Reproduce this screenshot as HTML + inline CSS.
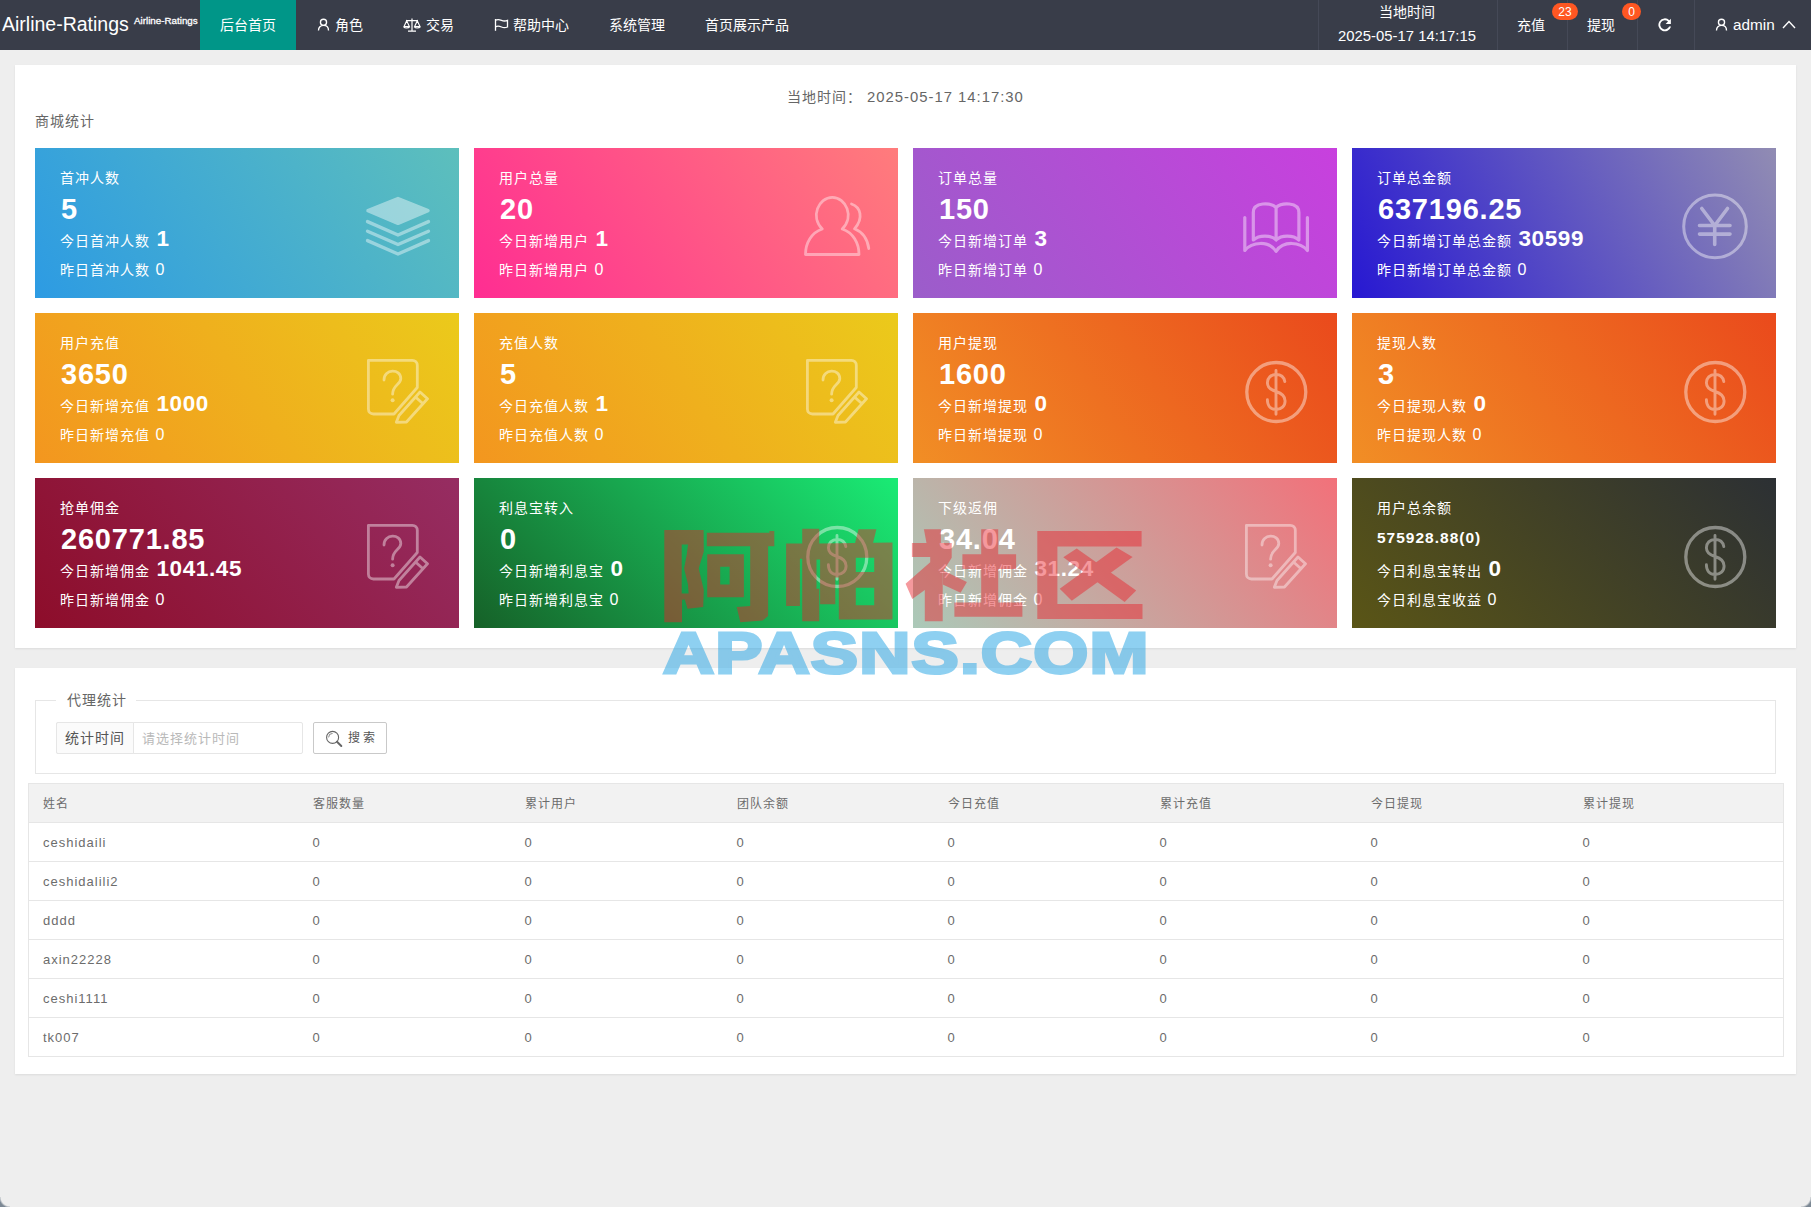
<!DOCTYPE html>
<html lang="zh-CN">
<head>
<meta charset="utf-8">
<title>Airline-Ratings</title>
<style>
*{box-sizing:border-box;margin:0;padding:0}
html,body{width:1811px;height:1207px;overflow:hidden}
body{background:#eeeeee;font-family:"Liberation Sans",sans-serif;font-size:14px;color:#666;position:relative}
#hd{position:absolute;left:0;top:0;width:1811px;height:50px;background:#393D49;color:#fff}
#hd .logo{position:absolute;left:2px;top:0;height:50px;line-height:49px;font-size:19.5px;color:#fff;white-space:nowrap}
#hd .logo2{position:absolute;left:134px;top:15px;line-height:12px;font-size:9.8px;-webkit-text-stroke:.3px #fff;color:#fff;white-space:nowrap}
#hd .nav{position:absolute;top:0;height:50px;line-height:50px;font-size:14px;color:#fff;white-space:nowrap}
#hd .act{background:#009688}
#hd .sep{position:absolute;top:0;width:1px;height:50px;background:#454957}
#hd svg{position:absolute}
.badge{position:absolute;top:3px;height:16.5px;line-height:18px;border-radius:9px;background:#FF5722;color:#fff;font-size:12px;text-align:center}
.panel{position:absolute;left:15px;width:1781px;background:#fff;box-shadow:0 1px 2px 0 rgba(0,0,0,.08)}
.card{position:absolute;width:424px;height:150px;color:#fff;letter-spacing:1px;overflow:hidden}
.card .t{position:absolute;left:24.5px;top:19.8px;font-size:14px;line-height:20px;white-space:nowrap}
.card .n{position:absolute;left:26px;top:44.3px;font-size:29px;line-height:34px;font-weight:bold;white-space:nowrap;letter-spacing:.8px}
.card .a{position:absolute;left:24.5px;top:76.200px;font-size:14px;line-height:30px;white-space:nowrap}
.card .a b{font-size:22.5px;margin-left:7px;vertical-align:0px;letter-spacing:.6px}
.card .y{position:absolute;left:24.5px;top:108.500px;font-size:14px;line-height:26px;white-space:nowrap}
.card .y i{font-style:normal;font-size:16px;margin-left:6px}
.card svg{position:absolute;left:0;top:0;width:424px;height:150px}
.ls{letter-spacing:1px}
.fs{position:absolute;left:35px;top:700px;width:1741px;height:74px;border:1px solid #e6e6e6}
.lg{position:absolute;left:56px;top:690px;width:80px;height:20px;background:#fff;line-height:20px;font-size:14px;color:#666;text-align:center;letter-spacing:1px;padding-left:1px}
table{position:absolute;left:28px;top:783px;width:1755px;border-collapse:collapse;table-layout:fixed;letter-spacing:1px;border-left:1px solid #e6e6e6;border-right:1px solid #e6e6e6}
td,th{height:39px;border:1px solid #e6e6e6;border-left:none;border-right:none;padding:2px 15px 0 14px;text-align:left;font-weight:normal;font-size:13px;color:#6c6c6c;line-height:20px}
th{background:#f2f2f2;font-size:12px}
</style>
</head>
<body>
<div id="hd">
<div class="logo">Airline-Ratings</div>
<div class="logo2">Airline-Ratings</div>
<div class="nav act" style="left:200px;width:96px;text-align:center">后台首页</div>
<svg style="left:317px;top:18px" width="13" height="13" viewBox="0 0 14 14" fill="none" stroke="#fff" stroke-width="1.45"><circle cx="7" cy="4.6" r="3.3"/><path d="M1.6 13.4c0-3.4 2.2-5.4 5.4-5.4s5.4 2 5.4 5.4"/></svg>
<div class="nav" style="left:335px">角色</div>
<svg style="left:403px;top:17px" width="18" height="16" viewBox="0 0 18 16" fill="none" stroke="#fff" stroke-width="1.2"><path d="M9 1.5v12M3 3.6h12M5 14.2h8M3.7 3.8 1 9.6h5.4zM14.3 3.8l-2.7 5.8H17z"/><path d="M1 9.8c.4 1.6 4.8 1.6 5.4 0M11.6 9.8c.4 1.6 4.8 1.6 5.4 0"/></svg>
<div class="nav" style="left:426px">交易</div>
<svg style="left:494px;top:18px" width="15" height="15" viewBox="0 0 15 15" fill="none" stroke="#fff" stroke-width="1.3"><path d="M1.5 1v11.8"/><path d="M1.5 2.2c2.5-1.2 4.2-.6 6 .2 1.900.8 3.600.9 6 0v6.600c-2.400.9-4.100.8-6 0-1.800-.8-3.500-1.400-6-.2"/></svg>
<div class="nav" style="left:513px">帮助中心</div>
<div class="nav" style="left:609px">系统管理</div>
<div class="nav" style="left:705px">首页展示产品</div>
<div class="sep" style="left:1318px"></div>
<div class="sep" style="left:1497px"></div>
<div class="sep" style="left:1567px"></div>
<div class="sep" style="left:1637px"></div>
<div class="sep" style="left:1694px"></div>
<div class="nav" style="left:1317px;width:179px;text-align:center;line-height:24px;height:24px;top:-0.5px">当地时间</div>
<div class="nav" style="left:1318px;width:179px;text-align:center;line-height:24px;height:24px;top:24px;font-size:14.85px;left:1317.500px">2025-05-17 14:17:15</div>
<div class="nav" style="left:1517px">充值</div>
<div class="badge" style="left:1552px;width:26px">23</div>
<div class="nav" style="left:1587px">提现</div>
<div class="badge" style="left:1622px;width:19px">0</div>
<svg style="left:1656px;top:16px" width="17.5" height="17.5" viewBox="0 0 16 16"><path d="M13.600 2.400v4.800H8.800l2.200-2.200A4.200 4.200 0 1 0 12 9.600h1.800A5.900 5.900 0 1 1 12.200 3.800z" fill="#fff"/></svg><svg style="left:1714.5px;top:18px" width="13" height="13" viewBox="0 0 14 14" fill="none" stroke="#fff" stroke-width="1.45"><circle cx="7" cy="4.6" r="3.3"/><path d="M1.6 13.4c0-3.4 2.2-5.4 5.4-5.4s5.4 2 5.4 5.4"/></svg>
<div class="nav" style="left:1733px;font-size:15.3px;line-height:49px">admin</div>
<svg style="left:1782px;top:20px" width="14" height="9" viewBox="0 0 14 9" fill="none" stroke="#fff" stroke-width="1.4"><path d="M1 8l6-6.500 6 6.500"/></svg>
</div>
<div class="panel" style="top:65px;height:583px"></div>
<div class="ls" style="position:absolute;left:0;top:85.500px;width:1811px;text-align:center;font-size:14px;line-height:22px;color:#666;white-space:pre">当地时间： <span style="font-size:14.85px">2025-05-17 14:17:30</span></div>
<div class="ls" style="position:absolute;left:34.500px;top:110px;font-size:14px;line-height:22px;color:#666">商城统计</div>
<div class="card" style="left:35px;top:148px;background:linear-gradient(55deg,#2d9be3,#5dbfbc)"><svg viewBox="0 0 424 150"><g opacity=".42" fill="#fff" stroke="#fff" stroke-linejoin="round" stroke-linecap="round">
<path d="M363 50.500 393 62.600 363 75.300 333 62.600Z" stroke-width="3.5"/>
<path d="M332.500 73.600 363 87 393.500 73.600M332.500 83.200 363 96.500 393.500 83.200M332.500 92.600 363 106 393.500 92.600" fill="none" stroke-width="3.4"/></g></svg><div class="t">首冲人数</div><div class="n">5</div><div class="a">今日首冲人数<b>1</b></div><div class="y">昨日首冲人数<i>0</i></div></div>
<div class="card" style="left:474px;top:148px;background:linear-gradient(55deg,#ff2d92,#ff7c7c)"><svg viewBox="0 0 424 150"><g opacity=".42" fill="none" stroke="#fff" stroke-width="2.8" stroke-linejoin="round" stroke-linecap="round">
<path d="M348.300 81 C336 69 344.500 49.300 358.300 49.300 C372.100 49.300 380.600 69 368.200 81 C379 84.500 385 95 385 106.500 H331.500 C331.500 95 337.500 84.500 348.300 81Z"/>
<path d="M377.500 56 C386.500 59 390 70 380.500 80.800 C388.500 84 393.500 91.500 394.800 100.500"/></g></svg><div class="t">用户总量</div><div class="n">20</div><div class="a">今日新增用户<b>1</b></div><div class="y">昨日新增用户<i>0</i></div></div>
<div class="card" style="left:913px;top:148px;background:linear-gradient(55deg,#9b5dca,#c840de)"><svg viewBox="0 0 424 150"><g opacity=".42" fill="none" stroke="#fff" stroke-width="3.2" stroke-linejoin="round" stroke-linecap="round">
<path d="M331.800 69.500V102.500C339 93.500 356 92.500 363.100 103.300 370.200 92.500 387 93.500 394.400 102.500V69.500"/>
<path d="M363.100 59.500C358 54.500 340.300 53.500 340.300 64.500V92C346 86.800 358 86.800 363.100 92 368.200 86.800 380.200 86.800 385.900 92V64.500C385.900 53.500 368.200 54.500 363.100 59.500V91"/></g></svg><div class="t">订单总量</div><div class="n">150</div><div class="a">今日新增订单<b>3</b></div><div class="y">昨日新增订单<i>0</i></div></div>
<div class="card" style="left:1352px;top:148px;background:linear-gradient(62deg,#2718d2,#918cb3)"><svg viewBox="0 0 424 150"><g opacity=".42" fill="none" stroke="#fff" stroke-linecap="round">
<circle cx="363" cy="78.400" r="31.300" stroke-width="3"/>
<path d="M349.800 60.500 362.700 77.500 375.500 60.500M362.700 77.500V96.500M347.500 77.500H378M347.500 86.100H378" stroke-width="3.6"/></g></svg><div class="t">订单总金额</div><div class="n">637196.25</div><div class="a">今日新增订单总金额<b>30599</b></div><div class="y">昨日新增订单总金额<i>0</i></div></div>
<div class="card" style="left:35px;top:313px;background:linear-gradient(55deg,#f3961f,#ebca1b)"><svg viewBox="0 0 424 150"><g opacity=".42" fill="none" stroke="#fff" stroke-width="2.8" stroke-linejoin="round" stroke-linecap="round">
<path d="M382.300 74.500V52.300C382.300 49.300 380.300 47.300 377.300 47.300H333.400V96C333.400 99 335.400 101 338.400 101H359L382.300 74.500"/>
<path d="M349 67C349 55.500 365.800 55.500 365.800 65.500 365.800 71.500 357.600 72 357.600 81.200"/>
<path d="M364 102.500 385 79 392.500 85.800 371.500 109 361.300 109.300ZM380.500 84 388 90.800"/></g>
<circle cx="357.600" cy="87.300" r="2" fill="#fff" opacity=".42"/></svg><div class="t">用户充值</div><div class="n">3650</div><div class="a">今日新增充值<b>1000</b></div><div class="y">昨日新增充值<i>0</i></div></div>
<div class="card" style="left:474px;top:313px;background:linear-gradient(55deg,#f3961f,#ebca1b)"><svg viewBox="0 0 424 150"><g opacity=".42" fill="none" stroke="#fff" stroke-width="2.8" stroke-linejoin="round" stroke-linecap="round">
<path d="M382.300 74.500V52.300C382.300 49.300 380.300 47.300 377.300 47.300H333.400V96C333.400 99 335.400 101 338.400 101H359L382.300 74.500"/>
<path d="M349 67C349 55.500 365.800 55.500 365.800 65.500 365.800 71.500 357.600 72 357.600 81.200"/>
<path d="M364 102.500 385 79 392.500 85.800 371.500 109 361.300 109.300ZM380.500 84 388 90.800"/></g>
<circle cx="357.600" cy="87.300" r="2" fill="#fff" opacity=".42"/></svg><div class="t">充值人数</div><div class="n">5</div><div class="a">今日充值人数<b>1</b></div><div class="y">昨日充值人数<i>0</i></div></div>
<div class="card" style="left:913px;top:313px;background:linear-gradient(55deg,#f18e25,#ea4a1c)"><svg viewBox="0 0 424 150"><g opacity=".42" fill="none" stroke="#fff" stroke-linecap="round">
<circle cx="363.300" cy="79" r="29.500" stroke-width="3.300"/>
<path d="M363 57.500V101.300M371.800 68.500C371 64 367.500 61.500 363 61.500 357.800 61.500 354.400 65 354.400 69.700 354.400 75 358 77 363 78.500 368 80 372.100 82.500 372.100 87.900 372.100 93 368.300 96.500 363 96.500 357.800 96.500 354.400 93 354.400 86.800" stroke-width="2.900"/></g></svg><div class="t">用户提现</div><div class="n">1600</div><div class="a">今日新增提现<b>0</b></div><div class="y">昨日新增提现<i>0</i></div></div>
<div class="card" style="left:1352px;top:313px;background:linear-gradient(55deg,#f18e25,#ea4a1c)"><svg viewBox="0 0 424 150"><g opacity=".42" fill="none" stroke="#fff" stroke-linecap="round">
<circle cx="363.300" cy="79" r="29.500" stroke-width="3.300"/>
<path d="M363 57.500V101.300M371.800 68.500C371 64 367.500 61.500 363 61.500 357.800 61.500 354.400 65 354.400 69.700 354.400 75 358 77 363 78.500 368 80 372.100 82.500 372.100 87.900 372.100 93 368.300 96.500 363 96.500 357.800 96.500 354.400 93 354.400 86.800" stroke-width="2.900"/></g></svg><div class="t">提现人数</div><div class="n">3</div><div class="a">今日提现人数<b>0</b></div><div class="y">昨日提现人数<i>0</i></div></div>
<div class="card" style="left:35px;top:478px;background:linear-gradient(50deg,#8d0d2a,#962d62)"><svg viewBox="0 0 424 150"><g opacity=".42" fill="none" stroke="#fff" stroke-width="2.8" stroke-linejoin="round" stroke-linecap="round">
<path d="M382.300 74.500V52.300C382.300 49.300 380.300 47.300 377.300 47.300H333.400V96C333.400 99 335.400 101 338.400 101H359L382.300 74.500"/>
<path d="M349 67C349 55.500 365.800 55.500 365.800 65.500 365.800 71.500 357.600 72 357.600 81.200"/>
<path d="M364 102.500 385 79 392.500 85.800 371.500 109 361.300 109.300ZM380.500 84 388 90.800"/></g>
<circle cx="357.600" cy="87.300" r="2" fill="#fff" opacity=".42"/></svg><div class="t">抢单佣金</div><div class="n">260771.85</div><div class="a">今日新增佣金<b>1041.45</b></div><div class="y">昨日新增佣金<i>0</i></div></div>
<div class="card" style="left:474px;top:478px;background:linear-gradient(45deg,#166128,#1aeb75)"><svg viewBox="0 0 424 150"><g opacity=".42" fill="none" stroke="#fff" stroke-linecap="round">
<circle cx="363.300" cy="79" r="29.500" stroke-width="3.300"/>
<path d="M363 57.500V101.300M371.800 68.500C371 64 367.500 61.500 363 61.500 357.800 61.500 354.400 65 354.400 69.700 354.400 75 358 77 363 78.500 368 80 372.100 82.500 372.100 87.900 372.100 93 368.300 96.500 363 96.500 357.800 96.500 354.400 93 354.400 86.800" stroke-width="2.900"/></g></svg><div class="t">利息宝转入</div><div class="n">0</div><div class="a">今日新增利息宝<b>0</b></div><div class="y">昨日新增利息宝<i>0</i></div></div>
<div class="card" style="left:913px;top:478px;background:linear-gradient(50deg,#abc9b8,#f2717a)"><svg viewBox="0 0 424 150"><g opacity=".42" fill="none" stroke="#fff" stroke-width="2.8" stroke-linejoin="round" stroke-linecap="round">
<path d="M382.300 74.500V52.300C382.300 49.300 380.300 47.300 377.300 47.300H333.400V96C333.400 99 335.400 101 338.400 101H359L382.300 74.500"/>
<path d="M349 67C349 55.500 365.800 55.500 365.800 65.500 365.800 71.500 357.600 72 357.600 81.200"/>
<path d="M364 102.500 385 79 392.500 85.800 371.500 109 361.300 109.300ZM380.500 84 388 90.800"/></g>
<circle cx="357.600" cy="87.300" r="2" fill="#fff" opacity=".42"/></svg><div class="t">下级返佣</div><div class="n">34.04</div><div class="a">今日新增佣金<b>31.24</b></div><div class="y">昨日新增佣金<i>0</i></div></div>
<div class="card" style="left:1352px;top:478px;background:linear-gradient(45deg,#5a5516,#2c3034)"><svg viewBox="0 0 424 150"><g opacity=".42" fill="none" stroke="#fff" stroke-linecap="round">
<circle cx="363.300" cy="79" r="29.500" stroke-width="3.300"/>
<path d="M363 57.500V101.300M371.800 68.500C371 64 367.500 61.500 363 61.500 357.800 61.500 354.400 65 354.400 69.700 354.400 75 358 77 363 78.500 368 80 372.100 82.500 372.100 87.900 372.100 93 368.300 96.500 363 96.500 357.800 96.500 354.400 93 354.400 86.800" stroke-width="2.900"/></g></svg><div class="t">用户总余额</div><div class="n" style="font-size:15.5px;letter-spacing:1px;top:43px;left:25px">575928.88(0)</div><div class="a">今日利息宝转出<b>0</b></div><div class="y">今日利息宝收益<i>0</i></div></div>
<div class="panel" style="top:668px;height:406px"></div>
<div class="fs"></div>
<div class="lg">代理统计</div>
<div style="position:absolute;left:56px;top:722px;width:247px;height:32px;border:1px solid #e6e6e6;border-radius:2px;background:#fff"></div>
<div class="ls" style="position:absolute;left:56px;top:722px;width:78px;height:32px;border:1px solid #e6e6e6;border-radius:2px 0 0 2px;background:#fbfbfb;line-height:30px;text-align:center;font-size:14px;color:#555;padding-right:1px">统计时间</div>
<div class="ls" style="position:absolute;left:142px;top:723px;height:32px;line-height:32px;font-size:13px;color:#b9b9b9">请选择统计时间</div>
<div style="position:absolute;left:313px;top:722px;width:74px;height:32px;border:1px solid #c9c9c9;border-radius:2px;background:#fff"><svg style="position:absolute;left:11px;top:7px" width="18" height="18" viewBox="0 0 18 18" fill="none" stroke="#666" stroke-width="1.1"><circle cx="7.6" cy="7.4" r="6"/><path d="M12 11.800 16.300 16" stroke-width="2" stroke-linecap="round"/><path d="M3.600 7.400a4 4 0 0 1 4-4" stroke-width=".8"/></svg><div style="position:absolute;left:34px;top:0;line-height:31px;font-size:12px;color:#555;letter-spacing:3px;white-space:nowrap">搜索</div></div>
<table><colgroup><col style="width:270px"><col style="width:212px"><col style="width:212px"><col style="width:211px"><col style="width:212px"><col style="width:211px"><col style="width:212px"><col style="width:215px"></colgroup><tr><th>姓名</th><th>客服数量</th><th>累计用户</th><th>团队余额</th><th>今日充值</th><th>累计充值</th><th>今日提现</th><th>累计提现</th></tr>
<tr><td>ceshidaili</td><td>0</td><td>0</td><td>0</td><td>0</td><td>0</td><td>0</td><td>0</td></tr>
<tr><td>ceshidalili2</td><td>0</td><td>0</td><td>0</td><td>0</td><td>0</td><td>0</td><td>0</td></tr>
<tr><td>dddd</td><td>0</td><td>0</td><td>0</td><td>0</td><td>0</td><td>0</td><td>0</td></tr>
<tr><td>axin22228</td><td>0</td><td>0</td><td>0</td><td>0</td><td>0</td><td>0</td><td>0</td></tr>
<tr><td>ceshi1111</td><td>0</td><td>0</td><td>0</td><td>0</td><td>0</td><td>0</td><td>0</td></tr>
<tr><td>tk007</td><td>0</td><td>0</td><td>0</td><td>0</td><td>0</td><td>0</td><td>0</td></tr>
</table>
<svg style="position:absolute;left:0;top:0;width:1811px;height:1207px;pointer-events:none" viewBox="0 0 1811 1207"><g fill="#eb1e28" opacity=".45"><path fill-rule="evenodd" d="M664.3 530.1 L703.6 530.1 L703.8 551.5 L698.7 568.5 L703.8 590.0 L703.2 607.0 L687.5 608.8 L684.8 599.4 L682.0 599.8 L682.0 622.2 L664.3 622.2ZM681.7 544.4 L688.0 544.4 L686.8 554.2 L684.1 568.5 L688.0 584.6 L688.6 593.6 L681.7 593.6Z"/>
<polygon points="706.8,532.7 769.4,532.7 769.4,530.9 774.3,530.9 774.3,546.2 768.1,546.2 768.1,616.0 762.7,620.4 740.3,622.2 736.7,607.0 750.2,606.1 750.2,546.2 706.8,546.2"/>
<path fill-rule="evenodd" d="M707.2 554.2 L743.9 554.2 L743.9 597.2 L707.2 597.2ZM720.2 566.7 L729.6 566.7 L729.6 584.6 L720.2 584.6Z"/>
<path fill-rule="evenodd" d="M802.2 528.7 L819.2 528.7 L819.2 543.5 L892.5 542.6 L892.5 619.5 L838.8 619.5 L838.8 577.5 L835.3 577.5 L835.3 604.3 L820.1 604.3 L820.1 589.1 L819.2 589.1 L819.2 621.3 L802.2 621.3 L802.2 558.7 L799.9 558.7 L799.9 606.1 L786.1 606.1 L786.1 543.5 L802.2 543.5ZM855.8 557.8 L874.2 557.8 L874.2 572.1 L855.8 572.1ZM855.8 587.8 L874.2 587.8 L874.2 605.2 L855.8 605.2ZM816.5 559.6 L820.1 559.6 L820.1 588.7 L816.5 588.7Z"/>
<polygon points="858.5,529.2 876.4,529.2 873.0,543.0 855.1,543.0"/>
<polygon points="923.9,529.2 940.9,529.2 940.9,543.5 926.6,543.5"/>
<polygon points="911.9,543.0 951.7,543.0 951.7,557.8 942.7,572.1 942.7,621.3 924.8,621.3 924.8,590.0 912.3,599.0 905.6,583.7 930.2,562.3 930.2,556.9 911.9,556.9"/>
<polygon points="942.7,570.3 966.9,581.9 960.6,592.7 942.7,584.6"/>
<polygon points="981.2,529.2 998.2,529.2 998.2,554.2 1016.1,554.2 1016.1,569.0 998.2,569.0 998.2,602.5 1022.4,602.5 1022.4,616.8 954.4,616.8 954.4,602.5 981.2,602.5 981.2,569.0 962.4,569.0 962.4,554.2 981.2,554.2"/>
<polygon points="1037.3,530.9 1141.6,530.9 1141.6,546.6 1057.4,546.6 1057.4,603.9 1142.5,603.9 1142.5,619.1 1037.3,619.1"/>
<polygon points="1063.3,557.3 1076.7,548.4 1136.2,590.5 1124.6,602.1"/>
<polygon points="1116.5,547.5 1132.6,556.9 1071.8,600.7 1059.7,588.7"/></g></svg>
<div style="position:absolute;left:662.5px;top:618.4px;opacity:.55;font-size:58px;line-height:70px;font-weight:bold;color:#33aae6;-webkit-text-stroke:3px #33aae6;white-space:nowrap;transform-origin:0 0;transform:scaleX(1.22);letter-spacing:1px;pointer-events:none">APASNS.COM</div>
<div style="position:absolute;left:0;top:1197px;width:10px;height:10px;background:radial-gradient(circle at 10px 0,#eee 0,#eee 9px,#7c8894 11px)"></div>
<div style="position:absolute;left:1801px;top:1197px;width:10px;height:10px;background:radial-gradient(circle at 0 0,#eee 0,#eee 9px,#7c8894 11px)"></div>
</body>
</html>
